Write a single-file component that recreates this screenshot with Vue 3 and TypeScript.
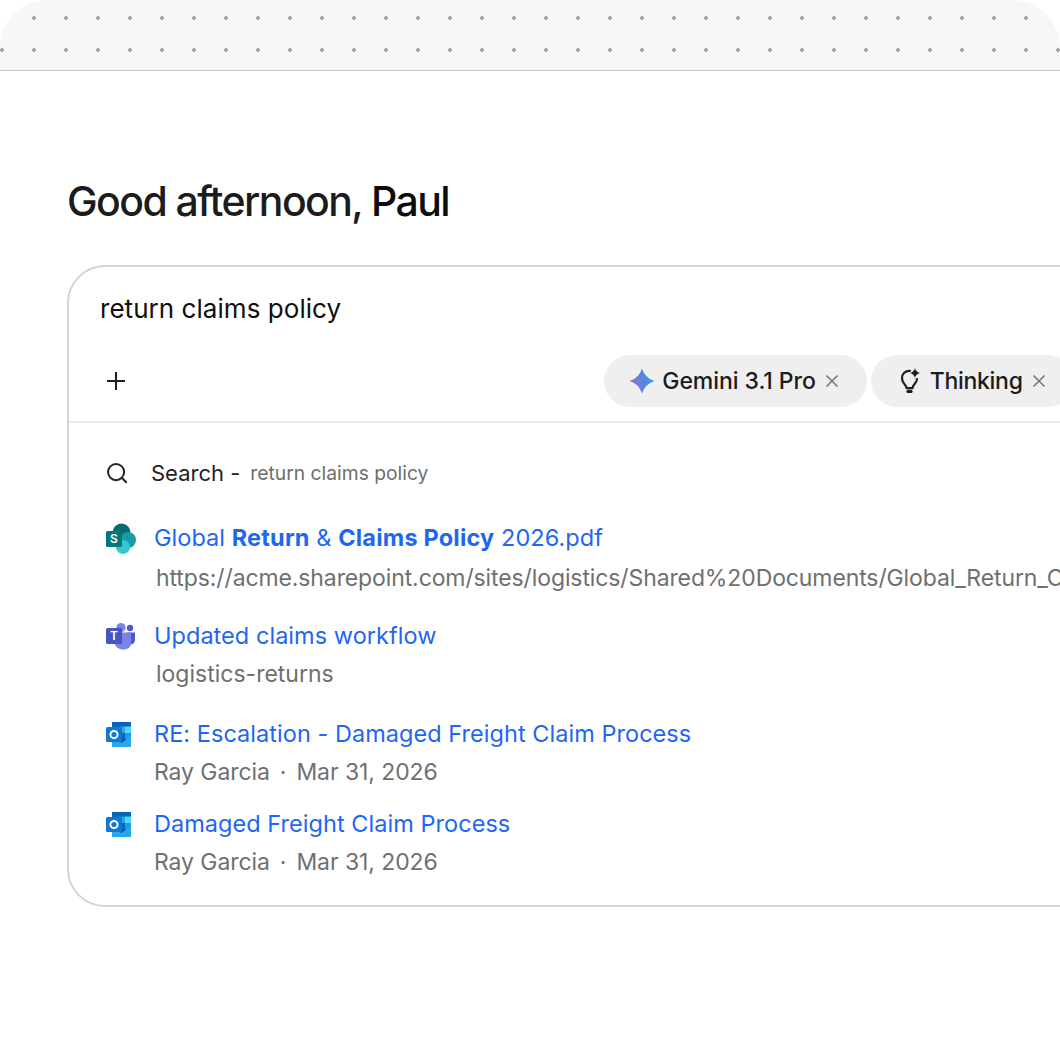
<template>
  <div class="page">
    <div class="topbar"></div>

    <main class="content">
      <h1 class="greeting">Good afternoon, <span class="name">Paul</span></h1>

      <section class="card">
        <div class="query">return claims policy</div>

        <div class="toolbar">
          <button class="add" aria-label="Add">
            <svg width="20" height="20" viewBox="0 0 20 20" fill="none" stroke="#1f1f1f" stroke-width="2">
              <path d="M10 1v18M1 10h18" />
            </svg>
          </button>
          <div class="spacer"></div>
          <div class="pill gemini">
            <svg class="pill-icon" width="26" height="26" viewBox="0 0 26 26">
              <defs>
                <linearGradient id="gem" x1="0" y1="0.6" x2="1" y2="0.4">
                  <stop offset="0" stop-color="#a06fca" />
                  <stop offset="0.5" stop-color="#5c84de" />
                  <stop offset="1" stop-color="#3d9cec" />
                </linearGradient>
              </defs>
              <path fill="url(#gem)" d="M13 0.5Q16 10 25.500 13Q16 16 13 25.500Q10 16 0.500 13Q10 10 13 0.500Z" />
            </svg>
            <span>Gemini 3.1 Pro</span>
            <svg class="close" width="14" height="14" viewBox="0 0 14 14" stroke="#777" stroke-width="1.6">
              <path d="M1.500 1.500l11 11M12.500 1.500l-11 11" />
            </svg>
          </div>
          <div class="pill thinking">
            <svg class="pill-icon" width="20" height="26" viewBox="0 0 20 26" fill="none">
              <path stroke="#1f1f1f" stroke-width="2.200" stroke-linecap="round" stroke-linejoin="round" d="M10 2.800C5.200 2.500 2 6 2 10.200C2 12.600 3 14.300 4.400 15.900C5.500 17.100 6.300 18.500 6.500 20.200H12.500C12.700 18.500 13.500 17.100 14.600 15.900C15.900 14.500 16.800 13 17 11" />
              <path stroke="#1f1f1f" stroke-width="3.200" stroke-linecap="round" d="M8 23.400H11" />
              <path fill="#1f1f1f" d="M15 0Q15.600 3.700 20 5Q15.600 6.300 15 10Q14.400 6.300 10 5Q14.400 3.700 15 0Z" />
            </svg>
            <span>Thinking</span>
            <svg class="close" width="14" height="14" viewBox="0 0 14 14" stroke="#777" stroke-width="1.6">
              <path d="M1.500 1.500l11 11M12.500 1.500l-11 11" />
            </svg>
          </div>
        </div>

        <div class="results">
          <div class="search-row">
            <svg class="search-icon" width="22" height="22" viewBox="0 0 24 24" fill="none" stroke="#262626" stroke-width="2.200" stroke-linecap="round">
              <circle cx="11" cy="11" r="8.800" />
              <path d="M17.500 17.500L22 22" />
            </svg>
            <span class="search-label">Search -</span>
            <span class="search-term">return claims policy</span>
          </div>

          <div v-for="item in items" :key="item.id" class="result" :class="item.id">
            <div class="result-icon">
              <svg v-if="item.app === 'sharepoint'" width="32" height="32" viewBox="0 0 32 32">
                <circle cx="16.500" cy="9.500" r="9" fill="#036c70" />
                <circle cx="23" cy="17" r="8" fill="#1a9ba1" />
                <circle cx="18" cy="24" r="7" fill="#37c6d0" />
                <rect x="1" y="8" width="16" height="16" rx="1.500" fill="#03787c" />
                <text x="9" y="20.200" text-anchor="middle" class="glyph">S</text>
              </svg>
              <svg v-else-if="item.app === 'teams'" width="32" height="32" viewBox="0 0 32 32">
                <circle cx="25" cy="7" r="3.200" fill="#5059c9" />
                <path fill="#5059c9" d="M22 11.500H30V19C30 21.500 28 23.500 25.500 23.500H22Z" />
                <path fill="#7b83eb" d="M10 11.500H26V23C26 26 22.500 28.500 18.500 28.500C13.500 28.500 10 26 10 22Z" />
                <circle cx="16" cy="6.500" r="4.600" fill="#7b83eb" />
                <rect x="1" y="7" width="16" height="16" rx="1.500" fill="#4b53bc" />
                <text x="9" y="19" text-anchor="middle" class="glyph">T</text>
              </svg>
              <svg v-else width="32" height="32" viewBox="0 0 32 32">
                <rect x="7" y="3" width="19" height="25" rx="1" fill="#0a4fa8" />
                <rect x="7" y="3" width="19" height="4.500" fill="#0364b8" />
                <rect x="7" y="7.500" width="6.500" height="6.500" fill="#0078d4" />
                <rect x="13.500" y="7.500" width="6.500" height="6.500" fill="#28a8ea" />
                <rect x="20" y="7.500" width="6" height="6.500" fill="#50d9ff" />
                <rect x="7" y="14" width="6.500" height="6.500" fill="#0078d4" />
                <rect x="13.500" y="14" width="6.500" height="6.500" fill="#0364b8" />
                <rect x="20" y="14" width="6" height="6.500" fill="#14a0e8" />
                <path fill="#28a8ea" d="M7 28V18L16.500 24L26 17V27C26 27.600 25.600 28 25 28Z" />
                <rect x="1" y="8" width="16" height="15" rx="1.500" fill="#0f78d4" />
                <circle cx="9" cy="15.500" r="3.600" fill="none" stroke="#fff" stroke-width="2" />
              </svg>
            </div>
            <div class="result-body">
              <a class="title">
                <template v-for="part in item.title" :key="part.text">
                  <strong v-if="part.bold">{{ part.text }}</strong>
                  <template v-else>{{ part.text }}</template>
                </template>
              </a>
              <div class="meta" :class="{ indent: item.indent }">
                <template v-if="item.date">
                  {{ item.meta }}<span class="dot">·</span>{{ item.date }}
                </template>
                <template v-else>{{ item.meta }}</template>
              </div>
            </div>
          </div>
        </div>
      </section>
    </main>
  </div>
</template>

<script setup lang="ts">
interface TitlePart {
  text: string
  bold?: boolean
}

interface ResultItem {
  id: string
  app: 'sharepoint' | 'teams' | 'outlook'
  title: TitlePart[]
  meta: string
  date?: string
  indent?: boolean
}

const items: ResultItem[] = [
  {
    id: 'r1',
    app: 'sharepoint',
    title: [
      { text: 'Global ' },
      { text: 'Return', bold: true },
      { text: ' & ' },
      { text: 'Claims Policy', bold: true },
      { text: ' 2026.pdf' },
    ],
    meta: 'https://acme.sharepoint.com/sites/logistics/Shared%20Documents/Global_Return_Claims_Policy_2026.pdf',
    indent: true,
  },
  {
    id: 'r2',
    app: 'teams',
    title: [{ text: 'Updated claims workflow' }],
    meta: 'logistics-returns',
    indent: true,
  },
  {
    id: 'r3',
    app: 'outlook',
    title: [{ text: 'RE: Escalation - Damaged Freight Claim Process' }],
    meta: 'Ray Garcia',
    date: 'Mar 31, 2026',
  },
  {
    id: 'r4',
    app: 'outlook',
    title: [{ text: 'Damaged Freight Claim Process' }],
    meta: 'Ray Garcia',
    date: 'Mar 31, 2026',
  },
]
</script>

<style scoped>
.page {
  width: 1060px;
  height: 1060px;
  overflow: hidden;
  background: #fff;
  font-family: Inter, "Liberation Sans", sans-serif;
  color: #1f1f1f;
}

.topbar {
  box-sizing: border-box;
  height: 71px;
  border-bottom: 1px solid #c9c9c9;
  border-radius: 48px 48px 0 0;
  background-color: #f7f7f7;
  background-image: radial-gradient(circle, #a3a3a3 1.6px, transparent 2px);
  background-size: 32px 32px;
  background-position: -14px 2px;
}

.content {
  padding: 106px 0 0 67px;
}

.greeting {
  margin: 0 0 40px;
  font-size: 41px;
  line-height: 48px;
  font-weight: 500;
  letter-spacing: -1.600px;
  color: #1c1c1c;
}

.name {
  color: #0c0c0c;
}

.card {
  box-sizing: border-box;
  width: 1040px;
  height: 642px;
  border: 2px solid #d4d4d4;
  border-radius: 38px;
}

.query {
  padding: 26px 0 0 31px;
  font-size: 26px;
  line-height: 32px;
  letter-spacing: 0.050px;
  color: #0f0f0f;
}

.toolbar {
  display: flex;
  align-items: center;
  gap: 4px;
  height: 52px;
  margin-top: 30px;
  padding-left: 37px;
}

.add {
  display: flex;
  padding: 0;
  border: 0;
  background: none;
}

.spacer {
  flex: 1;
}

.pill {
  display: flex;
  align-items: center;
  height: 52px;
  padding: 0 28px 0 26px;
  border-radius: 26px;
  background: #efefef;
  font-size: 23px;
  font-weight: 500;
  color: #1c1c1c;
  white-space: nowrap;
}

.pill-icon {
  margin-right: 7px;
}

.gemini {
  padding-left: 25px;
  letter-spacing: -0.060px;
}

.thinking {
  margin-right: 31.400px;
  padding-left: 29px;
  letter-spacing: -0.300px;
}

.thinking .pill-icon {
  margin-right: 10px;
}

.close {
  margin-left: 9px;
}

.results {
  margin-top: 14px;
  border-top: 2px solid #e8e8e8;
  padding: 35px 0 0 36px;
}

.search-row {
  display: flex;
  align-items: center;
  height: 30px;
}

.search-icon {
  margin: 0 23px 0 1px;
}

.search-label {
  font-size: 22px;
  margin-right: 10px;
}

.search-term {
  font-size: 19.300px;
  color: #6e6e6e;
}

.result {
  display: flex;
}

.result-icon {
  width: 49px;
  height: 30px;
  flex-shrink: 0;
}

.result-icon svg {
  display: block;
}

.glyph {
  font-size: 12px;
  font-weight: 600;
  fill: #fff;
}

.result-body {
  min-width: 0;
  white-space: nowrap;
}

.title {
  display: block;
  font-size: 23.500px;
  line-height: 30px;
  letter-spacing: 0.040px;
  color: #1f66f2;
}

.title strong {
  font-weight: 700;
  letter-spacing: 0.200px;
}

.meta {
  margin-top: 8px;
  font-size: 23px;
  line-height: 30px;
  letter-spacing: -0.080px;
  color: #6f6f6f;
}

.indent {
  margin-left: 2px;
}

.dot {
  margin: 0 10px;
}

.r1 {
  margin-top: 35px;
}

.r1 .meta {
  margin-top: 10px;
  letter-spacing: -0.110px;
}

.r2 {
  margin-top: 28px;
}

.r2 .meta {
  letter-spacing: 0;
}

.r3 {
  margin-top: 30px;
}

.r4 {
  margin-top: 22px;
}
</style>
